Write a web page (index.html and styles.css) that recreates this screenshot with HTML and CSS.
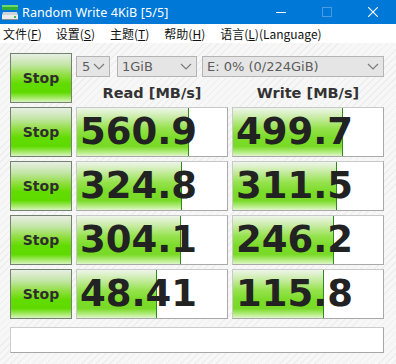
FILE: index.html
```html
<!doctype html>
<html>
<head>
<meta charset="utf-8">
<title>Random Write 4KiB [5/5]</title>
<link rel="stylesheet" href="styles.css">
</head>
<body>
<div class="titlebar">
	<svg class="appicon" width="18" height="18" viewBox="0 0 18 18">
		<rect x="1" y="2" width="16" height="5" fill="#2fae3a"/>
		<rect x="1" y="2" width="16" height="2" fill="#6fd86a"/>
		<path d="M2 9h14l1 3v5H1v-5z" fill="#cfd4d8"/>
		<rect x="1" y="12" width="16" height="5" fill="#e9ecee"/>
		<rect x="1" y="16" width="16" height="1" fill="#8a9096"/>
		<rect x="13" y="13" width="2" height="2" fill="#3bc43b"/>
	</svg>
	<span class="title">Random Write 4KiB [5/5]</span>
	<div class="winbtns">
		<span class="wb"><svg width="10" height="10"><rect x="0" y="5" width="10" height="1" fill="#fff"/></svg></span>
		<span class="wb"><svg width="10" height="10"><rect x="0.5" y="0.5" width="9" height="9" fill="none" stroke="#4a9be0"/></svg></span>
		<span class="wb"><svg width="10" height="10"><path d="M0 0L10 10M10 0L0 10" stroke="#fff" stroke-width="1.1"/></svg></span>
	</div>
</div>
<div class="menubar">
	<span class="mi">文件(<u>F</u>)</span>
	<span class="mi">设置(<u>S</u>)</span>
	<span class="mi">主题(<u>T</u>)</span>
	<span class="mi">帮助(<u>H</u>)</span>
	<span class="mi">语言(<u>L</u>)(Language)</span>
</div>
<div class="panel">
	<div class="stop">Stop</div>
	<div class="head">
		<div class="combos">
			<div class="combo c-count">5<svg width="12" height="7" viewBox="0 0 12 7"><path d="M1 1l5 5l5-5" fill="none" stroke="#7a7a7a" stroke-width="1.2"/></svg></div>
			<div class="combo c-size">1GiB<svg width="12" height="7" viewBox="0 0 12 7"><path d="M1 1l5 5l5-5" fill="none" stroke="#7a7a7a" stroke-width="1.2"/></svg></div>
			<div class="combo c-drive">E: 0% (0/224GiB)<svg width="12" height="7" viewBox="0 0 12 7"><path d="M1 1l5 5l5-5" fill="none" stroke="#7a7a7a" stroke-width="1.2"/></svg></div>
		</div>
		<div class="labels">
			<span>Read [MB/s]</span>
			<span>Write [MB/s]</span>
		</div>
	</div>

	<div class="stop">Stop</div>
	<div class="cell" style="--fill:111px">560.9</div>
	<div class="cell" style="--fill:109px">499.7</div>

	<div class="stop">Stop</div>
	<div class="cell" style="--fill:104px">324.8</div>
	<div class="cell" style="--fill:103px">311.5</div>

	<div class="stop">Stop</div>
	<div class="cell" style="--fill:103px">304.1</div>
	<div class="cell" style="--fill:100px">246.2</div>

	<div class="stop">Stop</div>
	<div class="cell" style="--fill:79px">48.41</div>
	<div class="cell" style="--fill:90px">115.8</div>

	<div class="status"></div>
</div>
</body>
</html>
```

FILE: styles.css
```css
*{margin:0; padding:0; box-sizing:border-box;}
body{width:396px; height:364px; overflow:hidden; background:#f6f6f6; font-family:"DejaVu Sans",sans-serif;}

.titlebar{height:24px; background:#0078d7; color:#fff; display:flex; align-items:center;}
.appicon{margin:0 3px 0 1px;}
.title{font-family:"Noto Sans",sans-serif; font-size:12.5px; letter-spacing:0.1px;}
.winbtns{margin-left:auto; display:flex;}
.wb{width:46px; height:24px; display:flex; align-items:center; justify-content:center;}

.menubar{height:19px; background:#fff; display:flex; align-items:center; font-family:"Noto Sans CJK SC",sans-serif; font-size:12px; color:#111;}
.mi{padding:0 7px 0 8px; line-height:19px;}
.mi:first-child{padding-left:3px;}
.mi:nth-child(2){padding-left:7px;}
.mi u{text-decoration:underline; text-underline-offset:1px;}

.panel{height:321px; padding:10px 0 0 10px; display:grid; grid-template-columns:62px 152px 152px; grid-template-rows:repeat(5,50px) 30px; column-gap:4px; row-gap:4px;
	background:repeating-linear-gradient(135deg,#f7f7f7 0 4px,#eeeeee 4px 5px);}

.stop{border:1px solid #72826e; display:flex; align-items:center; justify-content:center; font-weight:bold; font-size:14px; color:#2e2e2e;
	background:linear-gradient(to bottom,#e8eee4 0%,#c4e6a8 22%,#8ede3c 45%,#62dc00 62%,#5fda00 80%,#a8ea6c 92%,#d8f4c0 100%);}

.head{grid-column:2 / 4; display:flex; flex-direction:column;}
.combos{display:flex; margin-top:3px; height:21px;}
.combo{height:21px; background:#e5e5e5; border:1px solid #b4b4b4; color:#5c5c5c; font-size:13px; display:flex; align-items:center; justify-content:space-between; padding:0 4px 0 4px;}
.c-count{width:34px; padding-left:5px;}
.c-size{width:80px; margin-left:7px;}
.c-drive{width:182px; margin-left:5px;}
.labels{display:grid; grid-template-columns:152px 152px; column-gap:4px; margin-top:6px; font-weight:bold; font-size:14.5px; color:#333; text-align:center; line-height:20px;}

.cell{border:1px solid #c9c9c9; border-right-color:#a9a9a9; border-bottom-color:#a9a9a9; padding-left:3px; font-weight:bold; font-size:37px; line-height:48px; color:#222;
	background:linear-gradient(#2f8a1c,#2f8a1c) no-repeat var(--fill) 0 / 1px 100%,
		linear-gradient(to bottom,#eef5ea 0%,#c8eca4 20%,#96e24e 42%,#7cdc2a 62%,#78da26 80%,#b4ec80 92%,#e0f6cc 100%) no-repeat 0 0 / var(--fill) 100%,
		#fff;}

.status{grid-column:1 / 4; margin-top:4px; background:#fff; border:1px solid #cccccc; border-right-color:#a6a6a6; border-bottom-color:#a6a6a6;}
```
